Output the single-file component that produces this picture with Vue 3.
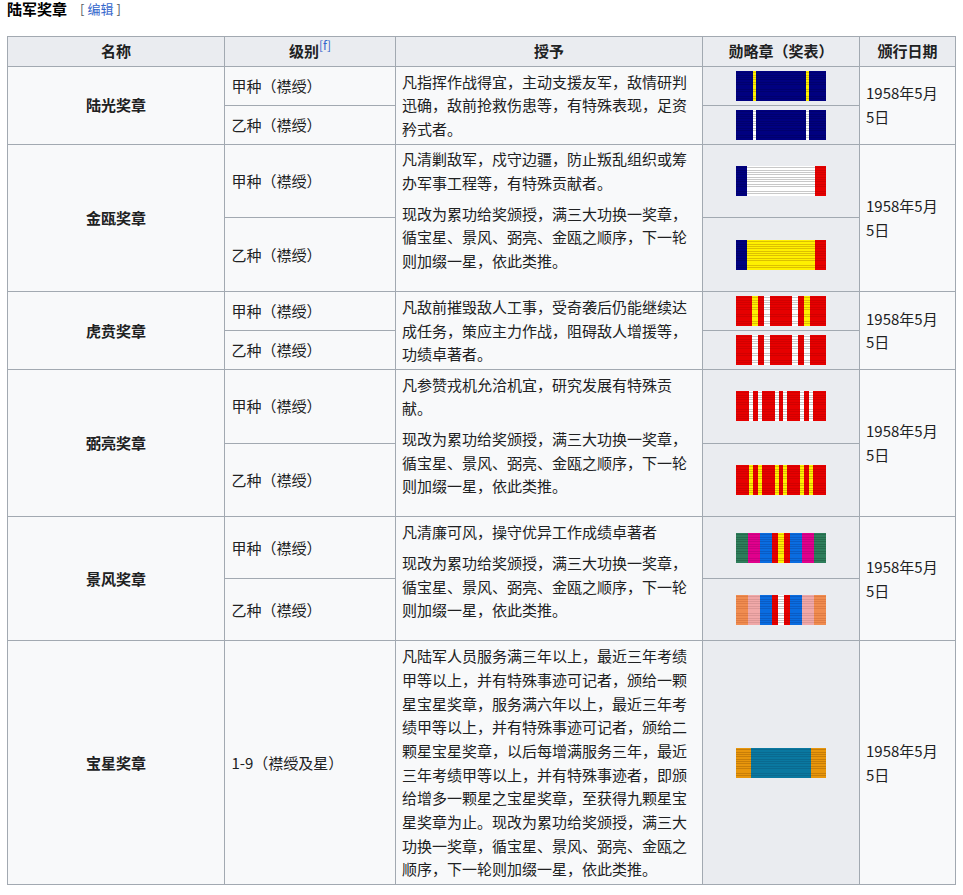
<script setup>
const blue = '#000080', red = '#e60000', yel = '#fff000', wht = '#ffffff', grn = '#2e7d5b', mag = '#e0008c', azu = '#0a6ce0', org = '#f08c50', pnk = '#f0a8a8'

const lines = {
  [blue]: '#00006e', [red]: '#d20000', [yel]: '#dcc000', [wht]: '#c8c8c8', [grn]: '#256b4c',
  [mag]: '#c80080', [azu]: '#0a5cc4', [org]: '#e07c44', [pnk]: '#dc9898', '#e8960c': '#c87e08', '#0a78a0': '#0a6a90'
}
const seg = (...list) => {
  const out = []
  for (let i = 0; i < list.length; i += 2) {
    const c = list[i]
    out.push({ w: list[i + 1], bg: `repeating-linear-gradient(180deg, ${c} 0 1.4px, ${lines[c]} 1.4px 2.35px)` })
  }
  return out
}
const lg = c => seg(blue, 16.7, c, 3.3, blue, 50, c, 3.3, blue, 16.7)
const hb = c => seg(red, 16, c, 6, red, 6, wht, 6, red, 22, wht, 6, red, 6, c, 6, red, 16)
const ll = c => seg(red, 13, c, 4, red, 5, c, 4, red, 13, c, 4, red, 4, c, 4, red, 13, c, 4, red, 5, c, 4, red, 13)
const jf = (a, b, c) => seg(a, 12, b, 12, azu, 12, red, 6, c, 6, red, 6, azu, 12, b, 12, a, 12)

const extra = '现改为累功给奖颁授，满三大功换一奖章，循宝星、景风、弼亮、金瓯之顺序，下一轮则加缀一星，依此类推。'

const awards = [
  { name: '陆光奖章', desc: ['凡指挥作战得宜，主动支援友军，敌情研判迅确，敌前抢救伤患等，有特殊表现，足资矜式者。'],
    grades: [{ t: '甲种（襟绶）', r: lg(yel) }, { t: '乙种（襟绶）', r: lg(wht) }] },
  { name: '金瓯奖章', desc: ['凡清剿敌军，戍守边疆，防止叛乱组织或筹办军事工程等，有特殊贡献者。', extra],
    grades: [{ t: '甲种（襟绶）', r: seg(blue, 11, wht, 68, red, 11) }, { t: '乙种（襟绶）', r: seg(blue, 11, yel, 68, red, 11) }] },
  { name: '虎贲奖章', desc: ['凡敌前摧毁敌人工事，受奇袭后仍能继续达成任务，策应主力作战，阻碍敌人增援等，功绩卓著者。'],
    grades: [{ t: '甲种（襟绶）', r: hb(yel) }, { t: '乙种（襟绶）', r: hb(wht) }] },
  { name: '弼亮奖章', desc: ['凡参赞戎机允洽机宜，研究发展有特殊贡献。', extra],
    grades: [{ t: '甲种（襟绶）', r: ll(wht) }, { t: '乙种（襟绶）', r: ll(yel) }] },
  { name: '景风奖章', desc: ['凡清廉可风，操守优异工作成绩卓著者', extra],
    grades: [{ t: '甲种（襟绶）', r: jf(grn, mag, yel) }, { t: '乙种（襟绶）', r: jf(org, pnk, wht) }] },
  { name: '宝星奖章', desc: ['凡陆军人员服务满三年以上，最近三年考绩甲等以上，并有特殊事迹可记者，颁给一颗星宝星奖章，服务满六年以上，最近三年考绩甲等以上，并有特殊事迹可记者，颁给二颗星宝星奖章，以后每增满服务三年，最近三年考绩甲等以上，并有特殊事迹者，即颁给增多一颗星之宝星奖章，至获得九颗星宝星奖章为止。现改为累功给奖颁授，满三大功换一奖章，循宝星、景风、弼亮、金瓯之顺序，下一轮则加缀一星，依此类推。'],
    grades: [{ t: '1-9（襟绶及星）', r: seg('#e8960c', 15, '#0a78a0', 60, '#e8960c', 15) }] }
]
</script>

<template>
  <div class="page">
    <div class="heading">
      <h4>陆军奖章</h4>
      <span class="edit">[<a>编辑</a>]</span>
    </div>
    <table class="table">
      <colgroup>
        <col class="c1" /><col class="c2" /><col class="c3" /><col class="c4" /><col class="c5" />
      </colgroup>
      <thead>
        <tr>
          <th>名称</th>
          <th>级别<sup class="ref">[f]</sup></th>
          <th>授予</th>
          <th>勋略章（奖表）</th>
          <th>颁行日期</th>
        </tr>
      </thead>
      <tbody>
        <template v-for="a in awards" :key="a.name">
          <tr v-for="(g, i) in a.grades" :key="i">
            <td v-if="i === 0" class="name" :rowspan="a.grades.length">{{ a.name }}</td>
            <td class="grade">{{ g.t }}</td>
            <td v-if="i === 0" class="desc" :rowspan="a.grades.length">
              <p v-for="(d, j) in a.desc" :key="j" class="para">{{ d }}</p>
            </td>
            <td class="medal">
              <div class="ribbon">
                <span v-for="(s, k) in g.r" :key="k" class="seg" :style="{ background: s.bg, width: s.w + 'px' }"></span>
              </div>
            </td>
            <td v-if="i === 0" class="date" :rowspan="a.grades.length">1958年5月<br />5日</td>
          </tr>
        </template>
      </tbody>
    </table>
  </div>
</template>

<style scoped>
.page {
  padding: 0 8px 0 7px;
  font-family: "Noto Sans CJK SC", "Noto Sans", sans-serif;
  font-size: 15px;
  line-height: 23.7px;
  color: #202122;
}
.heading {
  display: flex;
  align-items: center;
  height: 18px;
  margin-bottom: 17.5px;
}
.heading h4 {
  margin: 0;
  font-size: 15px;
  font-weight: 700;
  color: #000;
}
.edit {
  margin-left: 13px;
  font-size: 13px;
  color: #54595d;
}
.edit a {
  margin: 0 3px;
  color: #3366cc;
}
.table {
  width: 948px;
  table-layout: fixed;
  border-collapse: collapse;
  background: #f8f9fa;
}
.c1 { width: 217px; }
.c2 { width: 171px; }
.c3 { width: 307px; }
.c4 { width: 157px; }
.c5 { width: 96px; }
th, td {
  border: 1px solid #a2a9b1;
  padding: 2.8px 5.6px;
}
th {
  background: #eaecf0;
  font-weight: 700;
  text-align: center;
}
.ref {
  font-size: 12px;
  font-weight: 400;
  line-height: 1;
  color: #3366cc;
  vertical-align: 7px;
}
.name {
  font-weight: 700;
  text-align: center;
}
.grade {
  padding-left: 6.5px;
}
.desc {
  vertical-align: top;
  padding-left: 6px;
  padding-right: 6px;
}
.para {
  margin: 0 0 7px;
}
.para:last-child {
  margin-bottom: 15.5px;
}
.desc .para:only-child {
  margin-bottom: 0;
}
.medal {
  background: #eaecf0;
  text-align: center;
}
.ribbon {
  display: flex;
  width: 90px;
  height: 30px;
  margin: 0 auto;
}
.seg {
  display: block;
  height: 100%;
  flex: none;
}
.date {
  padding-left: 6px;
  padding-right: 0;
}
</style>
